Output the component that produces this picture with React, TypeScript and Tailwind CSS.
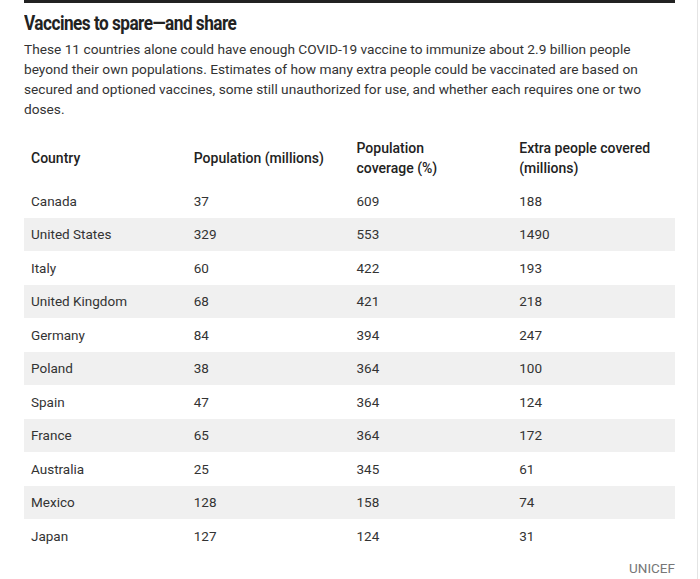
import React from "react";

const rows: [string, string, string, string][] = [
  ["Canada", "37", "609", "188"],
  ["United States", "329", "553", "1490"],
  ["Italy", "60", "422", "193"],
  ["United Kingdom", "68", "421", "218"],
  ["Germany", "84", "394", "247"],
  ["Poland", "38", "364", "100"],
  ["Spain", "47", "364", "124"],
  ["France", "65", "364", "172"],
  ["Australia", "25", "345", "61"],
  ["Mexico", "128", "158", "74"],
  ["Japan", "127", "124", "31"],
];

export default function App() {
  return (
    <div className="relative w-[700px] h-[579px] bg-white overflow-hidden" style={{ fontFamily: "Roboto, 'Liberation Sans', sans-serif" }}>
      <div className="absolute right-[2px] top-0 h-full w-px bg-[#e4e4e4]" />
      <div className="ml-[24px] w-[651px]">
        <div className="h-[3px] bg-[#222]" />
        <h1 className="mt-[6px] text-[20px] leading-[28px] font-bold text-[#222] tracking-[-0.6px] origin-left scale-x-[0.86] whitespace-nowrap">
          Vaccines to spare—and share
        </h1>
        <p className="mt-[2px] text-[13.7px] leading-[20px] text-[#333]">
          These 11 countries alone could have enough COVID-19 vaccine to immunize about 2.9 billion people beyond their own populations. Estimates of how many extra people could be vaccinated are based on secured and optioned vaccines, some still unauthorized for use, and whether each requires one or two doses.
        </p>
        <div className="mt-[12px]">
          <div className="grid grid-cols-4 h-[53px] items-center text-[14px] leading-[20px] font-medium text-[#222]">
            <div className="pl-[7px]">Country</div>
            <div className="pl-[7px]">Population (millions)</div>
            <div className="pl-[7px]">Population<br />coverage (%)</div>
            <div className="pl-[7px]">Extra people covered<br />(millions)</div>
          </div>
          {rows.map((r, i) => (
            <div
              key={r[0]}
              className={`grid grid-cols-4 h-[33.5px] items-center text-[13.5px] text-[#333] ${i % 2 === 1 ? "bg-[#f0f0f0]" : "bg-white"}`}
            >
              {r.map((c, j) => (
                <div key={j} className="pl-[7px]">{c}</div>
              ))}
            </div>
          ))}
        </div>
        <div className="mt-[6px] text-right text-[13.5px] leading-[18px] text-[#777]">UNICEF</div>
      </div>
    </div>
  );
}
